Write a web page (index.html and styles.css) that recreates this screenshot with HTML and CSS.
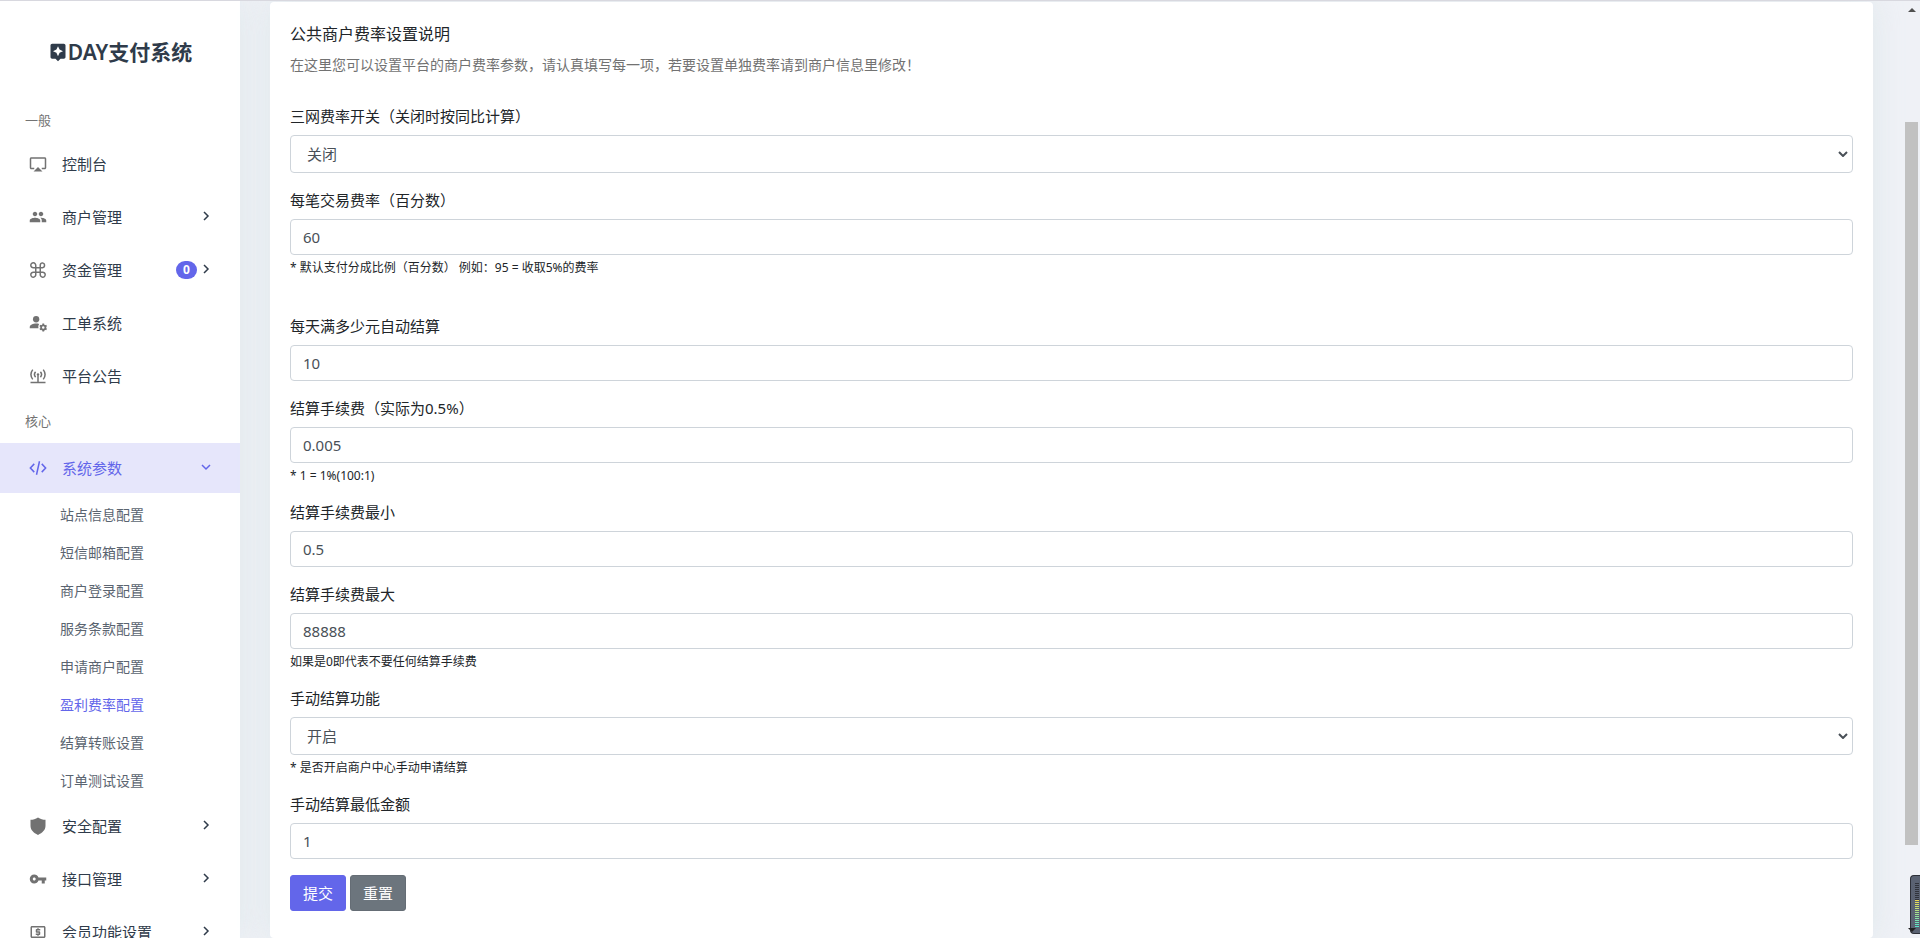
FILE: index.html
```html
<!DOCTYPE html>
<html lang="zh-CN">
<head>
<meta charset="utf-8">
<title>DAY支付系统</title>
<link rel="stylesheet" href="styles.css">
</head>
<body>
<aside class="sidebar">
  <a class="brand" href="#">
    <svg class="brand-icon" viewBox="0 0 24 24"><path d="M19 2H5c-1.11 0-2 .9-2 2v14c0 1.1.89 2 2 2h4l3 3 3-3h4c1.1 0 2-.9 2-2V4c0-1.1-.9-2-2-2zm-5.12 10.88L12 17l-1.88-4.12L6 11l4.12-1.88L12 5l1.88 4.12L18 11l-4.12 1.88z"/></svg>
    <span>DAY支付系统</span>
  </a>
  <nav class="nav">
    <h2 class="section">一般</h2>
    <a class="item" href="#">
      <svg class="icon" viewBox="0 0 24 24"><path d="M6 22h12l-6-6-6 6zM21 3H3c-1.1 0-2 .9-2 2v12c0 1.1.9 2 2 2h4v-2H3V5h18v12h-4v2h4c1.1 0 2-.9 2-2V5c0-1.1-.9-2-2-2z"/></svg>
      <span>控制台</span>
    </a>
    <a class="item" href="#">
      <svg class="icon" viewBox="0 0 24 24"><path d="M16 11c1.66 0 2.99-1.34 2.99-3S17.66 5 16 5s-3 1.34-3 3 1.34 3 3 3zm-8 0c1.66 0 2.99-1.34 2.99-3S9.66 5 8 5 5 6.34 5 8s1.34 3 3 3zm0 2c-2.33 0-7 1.17-7 3.5V19h14v-2.500c0-2.330-4.670-3.500-7-3.500zm8 0c-.29 0-.62.02-.97.050 1.160.840 1.970 1.970 1.970 3.450V19h6v-2.500c0-2.330-4.670-3.500-7-3.500z"/></svg>
      <span>商户管理</span>
      <svg class="chevron" viewBox="0 0 12 12"><path d="M4 2l4 4-4 4"/></svg>
    </a>
    <a class="item" href="#">
      <svg class="icon line" viewBox="0 0 24 24"><path d="M18 2.500a3.300 3.300 0 0 0-3 3.500v12a3.300 3.300 0 1 0 3-3H6a3.300 3.300 0 1 0 3 3V6a3.300 3.300 0 1 0-3 3h12a3.300 3.300 0 0 0 0-6.500z"/></svg>
      <span>资金管理</span>
      <span class="badge">0</span>
      <svg class="chevron" viewBox="0 0 12 12"><path d="M4 2l4 4-4 4"/></svg>
    </a>
    <a class="item" href="#">
      <svg class="icon" viewBox="0 0 24 24"><circle cx="9.500" cy="7" r="4.200"/><path d="M13.500 13.300c-1.200-.3-2.500-.5-4-.5C5.500 12.800 1 14.600 1 17.500V19h11.600a6.500 6.500 0 0 1 .9-5.700z"/><circle class="gear-ring" cx="19" cy="18" r="2.900"/><path class="gear-teeth" d="M19 12.800v2M19 21.200v2M14.500 15.400l1.700 1M21.800 19.600l1.700 1M14.500 20.600l1.700-1M21.800 16.400l1.700-1"/></svg>
      <span>工单系统</span>
    </a>
    <a class="item" href="#">
      <svg class="icon line" viewBox="0 0 24 24"><circle class="dot" cx="12" cy="10" r="1.600"/><path d="M8.800 6.500c-1.800 2-1.800 5 0 7M15.200 6.500c1.800 2 1.800 5 0 7M5 3.500c-3 4-3 9 0 13M19 3.500c3 4 3 9 0 13M12 11v9M2 20.500h20M9.500 20.500h5"/></svg>
      <span>平台公告</span>
    </a>
    <h2 class="section core">核心</h2>
    <a class="item active" href="#">
      <svg class="icon line" viewBox="0 0 24 24"><path d="M7 6.500L1.800 12 7 17.500M17 6.500l5.200 5.500-5.200 5.500M14 3l-4 18"/></svg>
      <span>系统参数</span>
      <svg class="chevron" viewBox="0 0 12 12"><path d="M2 4l4 4 4-4"/></svg>
    </a>
    <ul class="subnav">
      <li><a href="#">站点信息配置</a></li>
      <li><a href="#">短信邮箱配置</a></li>
      <li><a href="#">商户登录配置</a></li>
      <li><a href="#">服务条款配置</a></li>
      <li><a href="#">申请商户配置</a></li>
      <li><a class="current" href="#">盈利费率配置</a></li>
      <li><a href="#">结算转账设置</a></li>
      <li><a href="#">订单测试设置</a></li>
    </ul>
    <a class="item" href="#">
      <svg class="icon" viewBox="0 0 24 24"><path d="M12 .500c-3.300 2.200-6.500 3-10 3.300v8c0 5.500 4 9.500 10 12.200 6-2.700 10-6.700 10-12.200v-8c-3.500-.3-6.700-1.100-10-3.300z"/></svg>
      <span>安全配置</span>
      <svg class="chevron" viewBox="0 0 12 12"><path d="M4 2l4 4-4 4"/></svg>
    </a>
    <a class="item" href="#">
      <svg class="icon" viewBox="0 0 24 24"><path d="M12.650 10C11.830 7.670 9.610 6 7 6c-3.310 0-6 2.690-6 6s2.690 6 6 6c2.610 0 4.830-1.670 5.650-4H17v4h4v-4h2v-4H12.650zM7 14c-1.100 0-2-.9-2-2s.9-2 2-2 2 .9 2 2-.9 2-2 2z"/></svg>
      <span>接口管理</span>
      <svg class="chevron" viewBox="0 0 12 12"><path d="M4 2l4 4-4 4"/></svg>
    </a>
    <a class="item" href="#">
      <svg class="icon" viewBox="0 0 24 24"><path d="M11 17h2v-1h1c.55 0 1-.45 1-1v-3c0-.55-.45-1-1-1h-3v-1h4V8h-2V7h-2v1h-1c-.55 0-1 .45-1 1v3c0 .55.45 1 1 1h3v1H9v2h2v1zm9-13H4c-1.110 0-2 .89-2 2v12c0 1.110.89 2 2 2h16c1.110 0 2-.89 2-2V6c0-1.110-.89-2-2-2zm0 14H4V6h16v12z"/></svg>
      <span>会员功能设置</span>
      <svg class="chevron" viewBox="0 0 12 12"><path d="M4 2l4 4-4 4"/></svg>
    </a>
  </nav>
</aside>

<main class="content">
  <section class="card">
    <h1 class="title">公共商户费率设置说明</h1>
    <p class="intro">在这里您可以设置平台的商户费率参数，请认真填写每一项，若要设置单独费率请到商户信息里修改！</p>
    <form class="form">
      <div class="field">
        <label for="net">三网费率开关（关闭时按同比计算）</label>
        <div class="select-wrap">
          <select id="net"><option>关闭</option><option>开启</option></select>
          <svg class="arrow" viewBox="0 0 10 6"><path d="M1 1l4 4 4-4"/></svg>
        </div>
      </div>
      <div class="field spaced">
        <label for="rate">每笔交易费率（百分数）</label>
        <input id="rate" type="text" value="60">
        <small>* 默认支付分成比例（百分数） 例如：95 = 收取5%的费率</small>
      </div>
      <div class="field">
        <label for="auto">每天满多少元自动结算</label>
        <input id="auto" type="text" value="10">
      </div>
      <div class="field">
        <label for="fee">结算手续费（实际为0.5%）</label>
        <input id="fee" type="text" value="0.005">
        <small>* 1 = 1%(100:1)</small>
      </div>
      <div class="field">
        <label for="fee-min">结算手续费最小</label>
        <input id="fee-min" type="text" value="0.5">
      </div>
      <div class="field">
        <label for="fee-max">结算手续费最大</label>
        <input id="fee-max" type="text" value="88888">
        <small>如果是0即代表不要任何结算手续费</small>
      </div>
      <div class="field">
        <label for="manual">手动结算功能</label>
        <div class="select-wrap">
          <select id="manual"><option>开启</option><option>关闭</option></select>
          <svg class="arrow" viewBox="0 0 10 6"><path d="M1 1l4 4 4-4"/></svg>
        </div>
        <small>* 是否开启商户中心手动申请结算</small>
      </div>
      <div class="field">
        <label for="manual-min">手动结算最低金额</label>
        <input id="manual-min" type="text" value="1">
      </div>
      <div class="actions">
        <button class="btn primary" type="submit">提交</button>
        <button class="btn secondary" type="reset">重置</button>
      </div>
    </form>
  </section>
</main>

<div class="scrollbar" aria-hidden="true">
  <svg class="scroll-up" viewBox="0 0 8 4"><path d="M0 4l4-4 4 4z"/></svg>
  <div class="thumb"></div>
</div>
<div class="meter" aria-hidden="true">
  <span class="meter-idle"></span>
  <span class="meter-level"></span>
  <svg class="scroll-down" viewBox="0 0 8 4"><path d="M0 0h8l-4 4z"/></svg>
</div>
</body>
</html>
```
FILE: styles.css
```css
* {
  box-sizing: border-box;
}

body {
  display: flex;
  height: 100vh;
  margin: 0;
  overflow: hidden;
  border-top: 1px solid #d8d8df;
  background: #eff1f6;
  color: #212529;
  font-family: "Noto Sans", "Noto Sans CJK SC", sans-serif;
  font-size: 15px;
  line-height: 22px;
}

a {
  color: inherit;
  text-decoration: none;
}

.sidebar {
  flex: none;
  width: 240px;
  overflow: hidden;
  background: #fff;
  box-shadow: 0 0 30px rgba(200, 220, 220, 0.4);
}

.brand {
  display: flex;
  align-items: center;
  justify-content: center;
  height: 102px;
  color: #2f3b4a;
  font-size: 21px;
  font-weight: 600;
  line-height: 30px;
}

.brand-icon {
  width: 20px;
  height: 20px;
  fill: currentColor;
}

.nav {
  display: flex;
  flex-direction: column;
  gap: 3px;
}

.section {
  margin: 0;
  padding: 7px 25px 6px;
  color: #737373;
  font-size: 13px;
  font-weight: 400;
  line-height: 20px;
}

.core {
  padding: 7px 25px 9px;
}

.item {
  display: flex;
  align-items: center;
  height: 50px;
  padding: 0 28px 0 29px;
  color: #2f3b4a;
}

.icon {
  flex: none;
  width: 18px;
  height: 18px;
  margin-right: 15px;
  fill: #727272;
}

.line {
  fill: none;
  stroke: #727272;
  stroke-width: 2;
}

.line .dot {
  fill: #727272;
  stroke: none;
}

.gear-ring {
  fill: none;
  stroke: #727272;
  stroke-width: 2.400;
}

.gear-teeth {
  stroke: #727272;
  stroke-width: 2.400;
}

.chevron {
  width: 12px;
  height: 12px;
  margin-bottom: 3px;
  margin-left: auto;
  fill: none;
  stroke: currentColor;
  stroke-width: 1.500;
}

.badge {
  width: 21px;
  margin-left: auto;
  border-radius: 9px;
  background: #6366ea;
  color: #fff;
  font-size: 12px;
  font-weight: 700;
  line-height: 18px;
  text-align: center;
}

.badge + .chevron {
  margin-left: 3px;
}

.active {
  background: #e6e6fb;
  color: #6366ea;
}

.active .icon {
  stroke: currentColor;
}

.subnav {
  margin: 0 0 -2px;
  padding: 0;
  list-style: none;
}

.subnav a {
  display: block;
  padding: 8px 60px;
  color: #5a6470;
  font-size: 14px;
}

.subnav .current {
  color: #6366ea;
}

.content {
  flex: 1;
  min-width: 0;
  padding: 1px 47px 0 30px;
}

.card {
  min-height: 100%;
  padding: 20px;
  border-radius: 4px;
  background: #fff;
  box-shadow: 0 0 30px rgba(200, 220, 220, 0.4);
}

.title {
  margin: 0 0 8px;
  font-size: 16px;
  font-weight: 400;
  line-height: 24px;
}

.intro {
  margin: 0 0 29px;
  color: #727272;
  font-size: 14px;
}

.form,
.field {
  display: flex;
  flex-direction: column;
}

.form {
  gap: 16px;
}

.spaced {
  padding-bottom: 22px;
}

label {
  margin-bottom: 8px;
}

input,
select {
  width: 100%;
  height: 36px;
  margin: 0;
  padding: 0 12px;
  border: 1px solid #ced4da;
  border-radius: 4px;
  background: #fff;
  color: #495057;
  font: inherit;
}

select {
  height: 38px;
  padding: 0 16px;
  appearance: none;
}

.select-wrap {
  position: relative;
  display: flex;
}

.arrow {
  position: absolute;
  top: 16px;
  right: 5px;
  width: 10px;
  height: 6px;
  fill: none;
  stroke: #495057;
  stroke-width: 2;
  pointer-events: none;
}

small {
  padding-top: 4px;
  font-size: 12px;
  line-height: 18px;
}

.actions {
  display: flex;
  gap: 4px;
}

.btn {
  height: 36px;
  padding: 0 12px;
  border: 1px solid #6366ea;
  border-radius: 3px;
  background: #6366ea;
  color: #fff;
  font: inherit;
}

.secondary {
  border-color: #656d75;
  background: #6c757d;
}

.scrollbar {
  position: absolute;
  top: 1px;
  right: 2px;
  bottom: 0;
  display: flex;
  flex-direction: column;
  align-items: center;
  width: 13px;
  padding: 7px 0 93px;
}

.scroll-up,
.scroll-down {
  flex: none;
  width: 8px;
  height: 4px;
  fill: #505050;
}

.thumb {
  flex: 1;
  width: 13px;
  margin-top: 110px;
  background: #c1c1c1;
}

.meter {
  position: absolute;
  right: 0;
  bottom: 4px;
  width: 10px;
  height: 59px;
  padding: 7px 2px 7px 4px;
  border: 1px solid #2d3038;
  border-right: 0;
  border-radius: 4px 0 0 4px;
  background: #5a6272;
}

.meter-idle,
.meter-level {
  display: block;
  width: 4px;
}

.meter-idle {
  height: 17px;
  background: repeating-linear-gradient(#30333b 0 1px, #5a6272 1px 2px);
}

.meter-level {
  height: 28px;
  background: repeating-linear-gradient(transparent 0 1px, #5a6272 1px 2px), linear-gradient(#f0dc50, #50e6d2);
}

.scroll-down {
  position: absolute;
  bottom: 1px;
  left: -3px;
  fill: #202020;
}
```
